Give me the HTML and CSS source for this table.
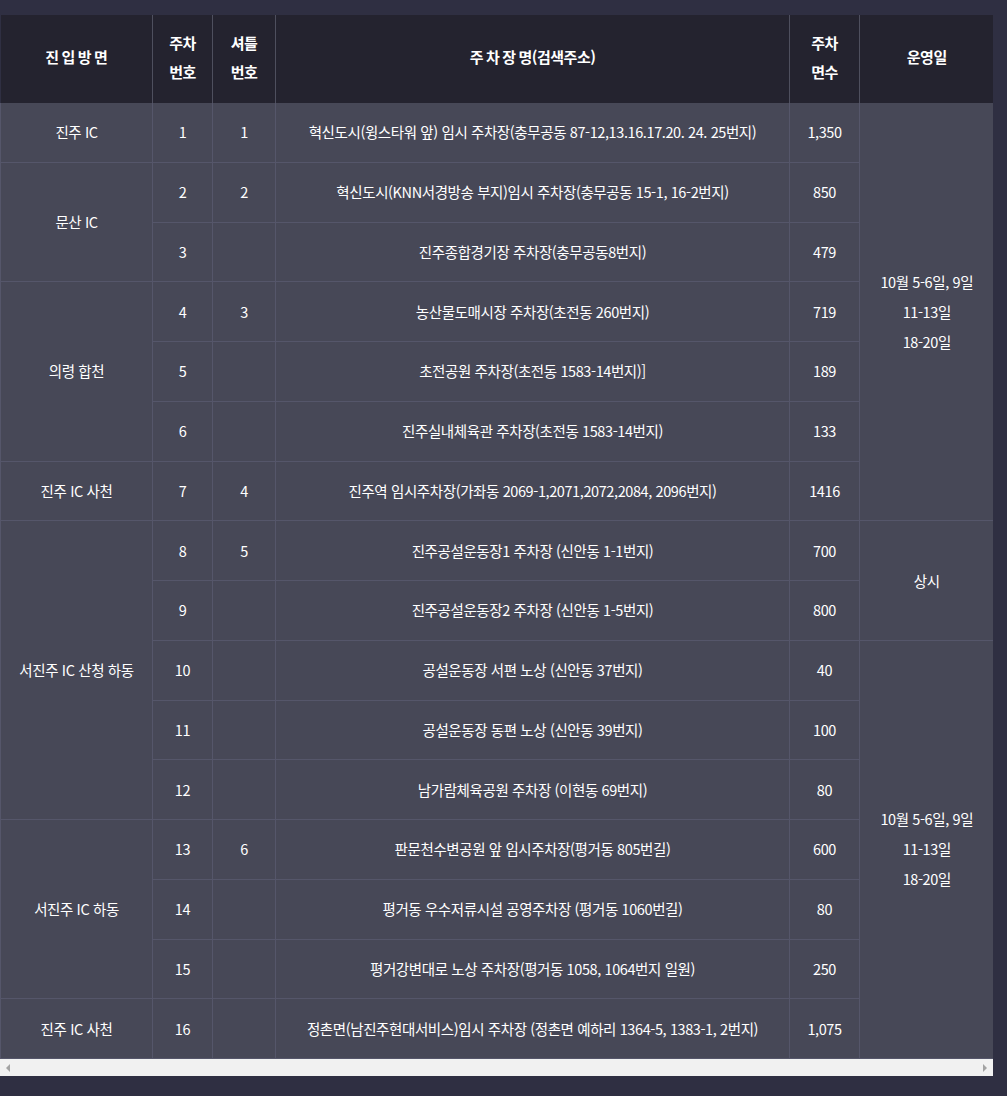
FILE: index.html
```html
<!DOCTYPE html>
<html lang="ko">
<head>
<meta charset="utf-8">
<link rel="stylesheet" href="styles.css">
</head>
<body>
<div class="page">
  <div class="scroller">
    <table class="parking">
      <colgroup>
        <col class="c1"><col class="c2"><col class="c3"><col class="c4"><col class="c5"><col class="c6">
      </colgroup>
      <thead>
        <tr>
          <th><span class="wide">진입방</span>면</th>
          <th>주차<br>번호</th>
          <th>셔틀<br>번호</th>
          <th><span class="wide">주차장</span>명(검색주소)</th>
          <th>주차<br>면수</th>
          <th>운영일</th>
        </tr>
      </thead>
      <tbody>
        <tr><td>진주 IC</td><td>1</td><td>1</td><td>혁신도시(윙스타워 앞) 임시 주차장(충무공동 87-12,13.16.17.20. 24. 25번지)</td><td>1,350</td><td rowspan="7">10월 5-6일, 9일<br>11-13일<br>18-20일</td></tr>
        <tr><td rowspan="2">문산 IC</td><td>2</td><td>2</td><td>혁신도시(KNN서경방송 부지)임시 주차장(충무공동 15-1, 16-2번지)</td><td>850</td></tr>
        <tr><td>3</td><td></td><td>진주종합경기장 주차장(충무공동8번지)</td><td>479</td></tr>
        <tr><td rowspan="3">의령 합천</td><td>4</td><td>3</td><td>농산물도매시장 주차장(초전동 260번지)</td><td>719</td></tr>
        <tr><td>5</td><td></td><td>초전공원 주차장(초전동 1583-14번지)]</td><td>189</td></tr>
        <tr><td>6</td><td></td><td>진주실내체육관 주차장(초전동 1583-14번지)</td><td>133</td></tr>
        <tr><td>진주 IC 사천</td><td>7</td><td>4</td><td>진주역 임시주차장(가좌동 2069-1,2071,2072,2084, 2096번지)</td><td>1416</td></tr>
        <tr><td rowspan="5">서진주 IC 산청 하동</td><td>8</td><td>5</td><td>진주공설운동장1 주차장 (신안동 1-1번지)</td><td>700</td><td rowspan="2">상시</td></tr>
        <tr><td>9</td><td></td><td>진주공설운동장2 주차장 (신안동 1-5번지)</td><td>800</td></tr>
        <tr><td>10</td><td></td><td>공설운동장 서편 노상 (신안동 37번지)</td><td>40</td><td rowspan="7">10월 5-6일, 9일<br>11-13일<br>18-20일</td></tr>
        <tr><td>11</td><td></td><td>공설운동장 동편 노상 (신안동 39번지)</td><td>100</td></tr>
        <tr><td>12</td><td></td><td>남가람체육공원 주차장 (이현동 69번지)</td><td>80</td></tr>
        <tr><td rowspan="3">서진주 IC 하동</td><td>13</td><td>6</td><td>판문천수변공원 앞 임시주차장(평거동 805번길)</td><td>600</td></tr>
        <tr><td>14</td><td></td><td>평거동 우수저류시설 공영주차장 (평거동 1060번길)</td><td>80</td></tr>
        <tr><td>15</td><td></td><td>평거강변대로 노상 주차장(평거동 1058, 1064번지 일원)</td><td>250</td></tr>
        <tr><td>진주 IC 사천</td><td>16</td><td></td><td>정촌면(남진주현대서비스)임시 주차장 (정촌면 예하리 1364-5, 1383-1, 2번지)</td><td>1,075</td></tr>
      </tbody>
    </table>
  </div>
  <div class="hscroll">
    <span class="arrow left"></span>
    <span class="arrow right"></span>
  </div>
</div>
</body>
</html>
```

FILE: styles.css
```css
html, body {
  margin: 0;
  padding: 0;
  background: #2f2f42;
}
body {
  font-family: "Noto Sans CJK KR", "Noto Sans", sans-serif;
  color: #ffffff;
  min-height: 1096px;
}
.page {
  padding-top: 15px;
  width: 993px;
}
.scroller {
  width: 993px;
  overflow: hidden;
}
.parking {
  width: 993px;
  border-collapse: collapse;
  table-layout: fixed;
}
.c1 { width: 152px; }
.c2 { width: 60px; }
.c3 { width: 63px; }
.c4 { width: 514px; }
.c5 { width: 70px; }
.c6 { width: 134px; }

.parking th {
  background: #24232f;
  height: 83px;
  padding: 0 0 5px;
  font-size: 15px;
  font-weight: 700;
  line-height: 29px;
  letter-spacing: -0.5px;
  border-left: 1px solid #4e4f5e;
  text-align: center;
}
.parking th:first-child { border-left: none; }
.parking th .wide { letter-spacing: 2.5px; }

.parking td {
  background: #474857;
  height: 58.75px;
  padding: 0;
  font-size: 14.5px;
  line-height: 30px;
  letter-spacing: -0.4px;
  text-align: center;
  border: 1px solid #55566a;
}
.parking tbody tr:first-child td { border-top: none; }
.parking td:last-child { border-right: none; }

.hscroll {
  position: relative;
  height: 17px;
  background: #f1f1f1;
}
.arrow {
  position: absolute;
  top: 5px;
  width: 0;
  height: 0;
  border-top: 4px solid transparent;
  border-bottom: 4px solid transparent;
}
.arrow.left {
  left: 6px;
  border-right: 4px solid #a3a3a3;
}
.arrow.right {
  right: 6px;
  border-left: 4px solid #a3a3a3;
}
```
